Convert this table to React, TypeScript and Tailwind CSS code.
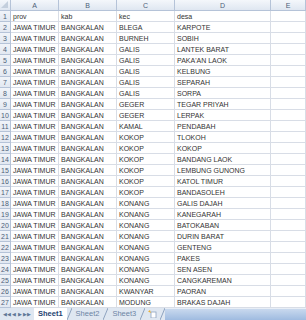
const rows: [string, string, string, string][] = [
  ["prov", "kab", "kec", "desa"],
  ["JAWA TIMUR", "BANGKALAN", "BLEGA", "KARPOTE"],
  ["JAWA TIMUR", "BANGKALAN", "BURNEH", "SOBIH"],
  ["JAWA TIMUR", "BANGKALAN", "GALIS", "LANTEK BARAT"],
  ["JAWA TIMUR", "BANGKALAN", "GALIS", "PAKA'AN LAOK"],
  ["JAWA TIMUR", "BANGKALAN", "GALIS", "KELBUNG"],
  ["JAWA TIMUR", "BANGKALAN", "GALIS", "SEPARAH"],
  ["JAWA TIMUR", "BANGKALAN", "GALIS", "SORPA"],
  ["JAWA TIMUR", "BANGKALAN", "GEGER", "TEGAR PRIYAH"],
  ["JAWA TIMUR", "BANGKALAN", "GEGER", "LERPAK"],
  ["JAWA TIMUR", "BANGKALAN", "KAMAL", "PENDABAH"],
  ["JAWA TIMUR", "BANGKALAN", "KOKOP", "TLOKOH"],
  ["JAWA TIMUR", "BANGKALAN", "KOKOP", "KOKOP"],
  ["JAWA TIMUR", "BANGKALAN", "KOKOP", "BANDANG LAOK"],
  ["JAWA TIMUR", "BANGKALAN", "KOKOP", "LEMBUNG GUNONG"],
  ["JAWA TIMUR", "BANGKALAN", "KOKOP", "KATOL TIMUR"],
  ["JAWA TIMUR", "BANGKALAN", "KOKOP", "BANDASOLEH"],
  ["JAWA TIMUR", "BANGKALAN", "KONANG", "GALIS DAJAH"],
  ["JAWA TIMUR", "BANGKALAN", "KONANG", "KANEGARAH"],
  ["JAWA TIMUR", "BANGKALAN", "KONANG", "BATOKABAN"],
  ["JAWA TIMUR", "BANGKALAN", "KONANG", "DURIN BARAT"],
  ["JAWA TIMUR", "BANGKALAN", "KONANG", "GENTENG"],
  ["JAWA TIMUR", "BANGKALAN", "KONANG", "PAKES"],
  ["JAWA TIMUR", "BANGKALAN", "KONANG", "SEN ASEN"],
  ["JAWA TIMUR", "BANGKALAN", "KONANG", "CANGKAREMAN"],
  ["JAWA TIMUR", "BANGKALAN", "KWANYAR", "PAORAN"],
  ["JAWA TIMUR", "BANGKALAN", "MODUNG", "BRAKAS DAJAH"],
];

const cols = "grid grid-cols-[11px_48px_58px_58px_96px_1fr]";

function Cell({ text }: { text: string }) {
  return (
    <div className="flex h-[11px] items-center overflow-hidden whitespace-nowrap border-b border-r border-[#d8dde6] pl-[2px] text-[#333]">
      {text}
    </div>
  );
}

function Slant() {
  return (
    <svg width="5" height="12" className="block">
      <path d="M0 12 L5 0" stroke="#8ea3bf" strokeWidth="1" />
    </svg>
  );
}

function TabBar() {
  return (
    <div className="flex h-[12px] items-stretch bg-[#dfe7f1] text-[7.5px]">
      <div className="flex w-[34px] items-center justify-around px-[2px] text-[5px] text-[#5f7796]">
        <span>◀◀</span>
        <span>◀</span>
        <span>▶</span>
        <span>▶▶</span>
      </div>
      <div className="flex items-stretch">
        <div className="flex items-center bg-white px-[4px] font-bold text-[#1e3f70]">Sheet1</div>
        <Slant />
        <div className="flex items-center px-[4px] text-[#6d84a4]">Sheet2</div>
        <Slant />
        <div className="flex items-center px-[4px] text-[#6d84a4]">Sheet3</div>
        <Slant />
        <div className="flex items-center px-[3px]">
          <svg width="9" height="8" viewBox="0 0 9 8">
            <rect x="3" y="2" width="5" height="6" fill="#fff" stroke="#8ea3bf" strokeWidth="0.8" />
            <path d="M2 0 L3 3 L0 1.5 Z" fill="#e8b13a" />
          </svg>
        </div>
        <Slant />
      </div>
      <div className="flex-1 border-t border-[#e8eef6] bg-gradient-to-b from-[#c9d9ee] to-[#9fbbe0]" />
    </div>
  );
}

export default function App() {
  return (
    <div className="h-[320px] w-[306px] overflow-hidden bg-white font-['Liberation_Sans',Arial,sans-serif] text-[7px] leading-none">
      <div className={`${cols} h-[11px] bg-gradient-to-b from-[#f4f7fb] to-[#dde5f0] text-[#4d5f78]`}>
        <div className="relative border-b border-r border-[#b5c3d8]">
          <svg width="10" height="10" className="absolute right-[1px] bottom-[1px]">
            <path d="M9 2 L9 9 L2 9 Z" fill="#c4cfdd" />
          </svg>
        </div>
        {["A", "B", "C", "D", "E"].map((c) => (
          <div key={c} className="flex items-center justify-center border-b border-r border-[#b5c3d8]">
            {c}
          </div>
        ))}
      </div>
      {rows.map((r, i) => (
        <div key={i} className={cols}>
          <div className="flex h-[11px] items-center justify-center border-b border-r border-[#b5c3d8] bg-gradient-to-b from-[#f1f4f9] to-[#e2e8f1] text-[#4d5f78]">
            {i + 1}
          </div>
          <Cell text={r[0]} />
          <Cell text={r[1]} />
          <Cell text={r[2]} />
          <Cell text={r[3]} />
          <Cell text="" />
        </div>
      ))}
      <TabBar />
    </div>
  );
}
